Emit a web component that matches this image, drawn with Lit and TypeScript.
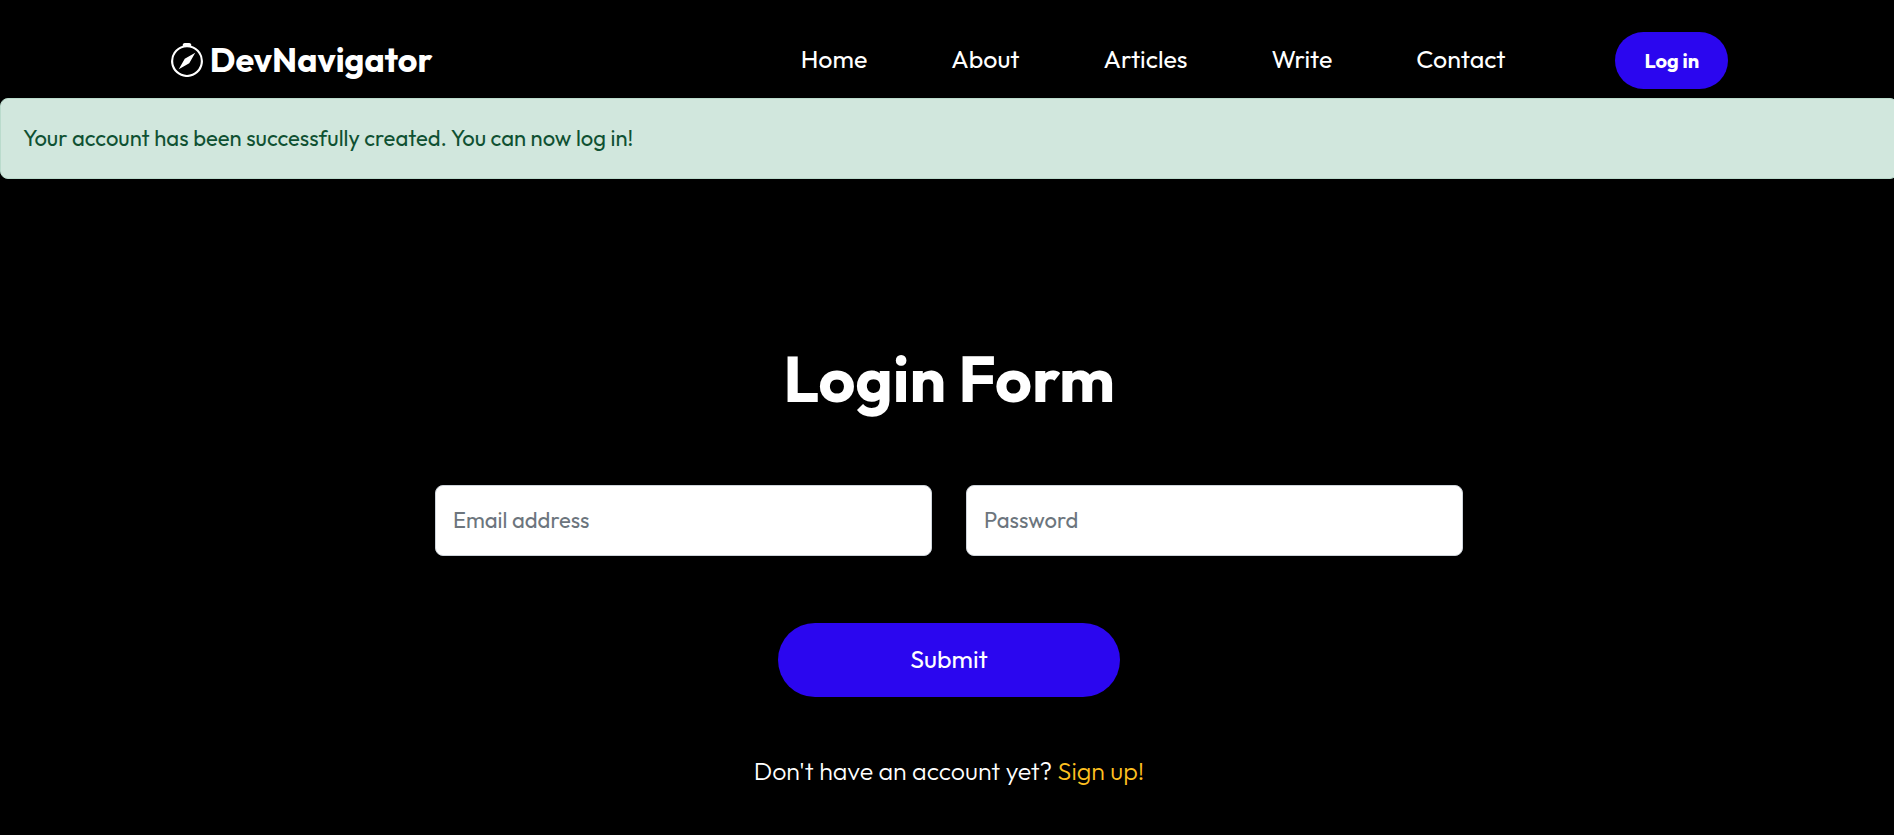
import { LitElement, html, css } from "lit";
import { customElement } from "lit/decorators.js";

const NAV_LINKS = ["Home", "About", "Articles", "Write", "Contact"];

@customElement("app-root")
export class AppRoot extends LitElement {
  static styles = css`
    :host {
      display: block;
      min-height: 100vh;
      overflow: hidden;
      background: #000;
      color: #fff;
      font-family: Outfit, Lato, "Open Sans", sans-serif;
      font-size: 25px;
      line-height: 32px;
    }
    * {
      box-sizing: border-box;
    }
    a {
      color: inherit;
      text-decoration: none;
    }
    .page {
      margin-right: -4px;
    }
    .header {
      display: flex;
      align-items: center;
      justify-content: space-between;
      padding: 32px calc(9% - 1px) 9px;
    }
    .brand {
      display: flex;
      align-items: center;
      gap: 6px;
      padding-bottom: 2px;
      font-size: 34px;
      line-height: 40px;
      font-weight: 700;
    }
    .brand-icon {
      width: 34px;
      height: 34px;
      fill: currentColor;
    }
    .menu {
      display: flex;
      align-items: center;
      gap: 110px;
    }
    .links {
      display: flex;
      gap: 84px;
      margin: 0;
      padding: 0 0 3px;
      list-style: none;
    }
    .login {
      padding: 13px 29px 12px;
      border-radius: 29px;
      background: #2b06ef;
      font-size: 20px;
      font-weight: 700;
    }
    .alert {
      padding: 23px 22px 24px;
      border: 1px solid #badbcc;
      border-radius: 8px;
      background: #d1e7dd;
      color: #0f5132;
      font-size: 22px;
    }
    .form {
      display: flex;
      flex-direction: column;
      align-items: center;
      width: 70%;
      max-width: 1028px;
      margin: 0 auto;
      padding: 160px 0 40px;
    }
    .title {
      margin: 0 0 66px;
      font-size: 64px;
      line-height: 80px;
      font-weight: 700;
    }
    .fields {
      display: grid;
      grid-template-columns: 1fr 1fr;
      gap: 34px;
      width: 100%;
      margin-bottom: 67px;
    }
    .field {
      width: 100%;
      padding: 18px 17px 19px;
      border: 1px solid #ced4da;
      border-radius: 8px;
      background: #fff;
      color: #212529;
      font: inherit;
      font-size: 22px;
    }
    .field::placeholder {
      color: #6c757d;
      opacity: 1;
    }
    .submit {
      width: 33.33%;
      padding: 20px 24px 22px;
      border: 0;
      border-radius: 37px;
      background: #2b06ef;
      color: #fff;
      font: inherit;
    }
    .signup {
      margin: 58px 0 0;
      font-weight: 300;
    }
    .signup-link {
      color: #ffc120;
    }
  `;

  render() {
    return html`
      <div class="page">
        <header class="header">
          <a class="brand" href="#">
            <svg class="brand-icon" viewBox="0 0 16 16" aria-hidden="true">
              <path
                d="M8 16.016a7.5 7.5 0 0 0 1.962-14.74A1 1 0 0 0 9 0H7a1 1 0 0 0-.962 1.276A7.5 7.5 0 0 0 8 16.016zm6.5-7.5a6.5 6.5 0 1 1-13 0 6.5 6.5 0 0 1 13 0z"
              />
              <path d="m6.94 7.44 4.95-2.83-2.83 4.95-4.949 2.83 2.828-4.95z" />
            </svg>
            <span>DevNavigator</span>
          </a>
          <nav class="menu">
            <ul class="links">
              ${NAV_LINKS.map((name) => html`<li><a href="#">${name}</a></li>`)}
            </ul>
            <a class="login" href="#">Log in</a>
          </nav>
        </header>
        <div class="alert" role="alert">
          Your account has been successfully created. You can now log in!
        </div>
        <main>
          <form class="form">
            <h1 class="title">Login Form</h1>
            <div class="fields">
              <label>
                <input class="field" type="email" placeholder="Email address" aria-label="Email address" />
              </label>
              <label>
                <input class="field" type="password" placeholder="Password" aria-label="Password" />
              </label>
            </div>
            <button class="submit" type="button">Submit</button>
            <p class="signup">
              Don't have an account yet? <a class="signup-link" href="#">Sign up!</a>
            </p>
          </form>
        </main>
      </div>
    `;
  }
}
